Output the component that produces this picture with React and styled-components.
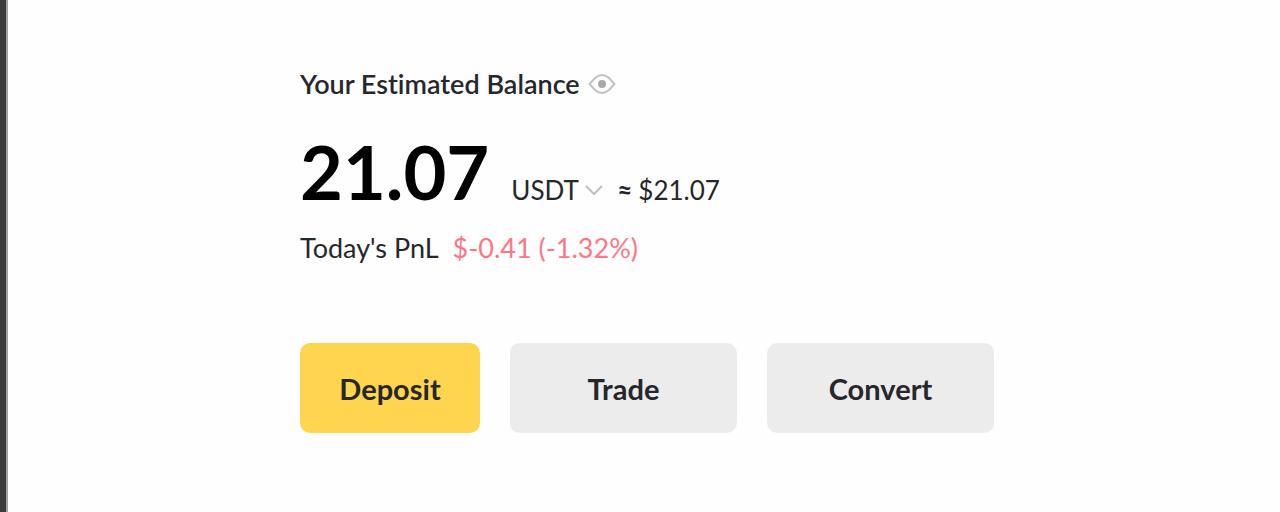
import React from "react";
import styled, { createGlobalStyle } from "styled-components";

const GlobalStyle = createGlobalStyle`
  * { box-sizing: border-box; }
  body {
    margin: 0;
    background: #fefefe;
    color: #26272b;
    font-family: Lato, "Open Sans", sans-serif;
    font-variant-ligatures: none;
  }
  button, select { font-family: inherit; color: inherit; }
`;

const Page = styled.main`
  min-height: 100vh;
  border-left: 6px solid #3a3a3a;
  box-shadow: inset 2px 0 0 #a2a2a2;
  padding: 68px 284px 78px 294px;
`;

const Heading = styled.header`
  display: flex;
  align-items: center;
  gap: 8px;
  height: 32px;
`;

const Title = styled.h1`
  margin: 0;
  font-size: 27px;
  font-weight: 600;
  line-height: 32px;
`;

const IconButton = styled.button`
  display: flex;
  padding: 0;
  border: 0;
  background: none;
  cursor: pointer;
`;

const Balance = styled.div`
  display: flex;
  align-items: baseline;
  margin-top: 30px;
  font-size: 26px;
  line-height: 32px;
`;

const Amount = styled.strong`
  margin-right: 22px;
  color: #000;
  font-size: 74px;
  font-weight: 700;
  line-height: 84px;
`;

const CurrencyField = styled.label`
  display: flex;
  align-items: center;
  gap: 6px;
  margin-right: 14px;
`;

const Currency = styled.select`
  appearance: none;
  padding: 0;
  border: 0;
  background: none;
  font-size: 26px;
  line-height: 32px;
`;

const Equivalent = styled.span`
  display: flex;
  align-items: baseline;
  gap: 6px;
`;

const Approx = styled.span`
  font-weight: 700;
`;

const Profit = styled.p`
  display: flex;
  gap: 14px;
  margin: 18px 0 0;
  font-size: 27px;
  line-height: 32px;
`;

const Loss = styled.span`
  color: #ff7584;
`;

const Actions = styled.div`
  display: flex;
  gap: 30px;
  margin-top: 79px;
`;

const Action = styled.button`
  flex: 0 1 ${({ $primary }) => ($primary ? 180 : 227)}px;
  height: 90px;
  border: 0;
  border-radius: 10px;
  background: ${({ $primary }) => ($primary ? "#ffd54f" : "#ececec")};
  font-size: 29px;
  font-weight: 700;
  cursor: pointer;
`;

export default function App() {
  return (
    <Page>
      <GlobalStyle />
      <Heading>
        <Title>Your Estimated Balance</Title>
        <IconButton type="button" aria-label="Hide balance">
          <svg width="28" height="22" viewBox="0 0 28 22" fill="none" stroke="#c2c2c2" strokeWidth="2" strokeLinejoin="round">
            <path d="M1.500 11L7 5Q14 -1 21 5L26.500 11L21 17Q14 23 7 17Z" />
            <circle cx="14" cy="11" r="4" fill="#a8a8a8" stroke="none" />
          </svg>
        </IconButton>
      </Heading>
      <Balance>
        <Amount>21.07</Amount>
        <CurrencyField>
          <Currency aria-label="Currency"><option>USDT</option></Currency>
          <svg width="18" height="12" viewBox="0 0 18 12" fill="none" stroke="#c0c0c0" strokeWidth="2">
            <path d="M1 2L9 10L17 2" />
          </svg>
        </CurrencyField>
        <Equivalent><Approx>≈</Approx><span>$21.07</span></Equivalent>
      </Balance>
      <Profit><span>Today's PnL</span><Loss>$-0.41 (-1.32%)</Loss></Profit>
      <Actions>
        <Action type="button" $primary>Deposit</Action>
        <Action type="button">Trade</Action>
        <Action type="button">Convert</Action>
      </Actions>
    </Page>
  );
}
